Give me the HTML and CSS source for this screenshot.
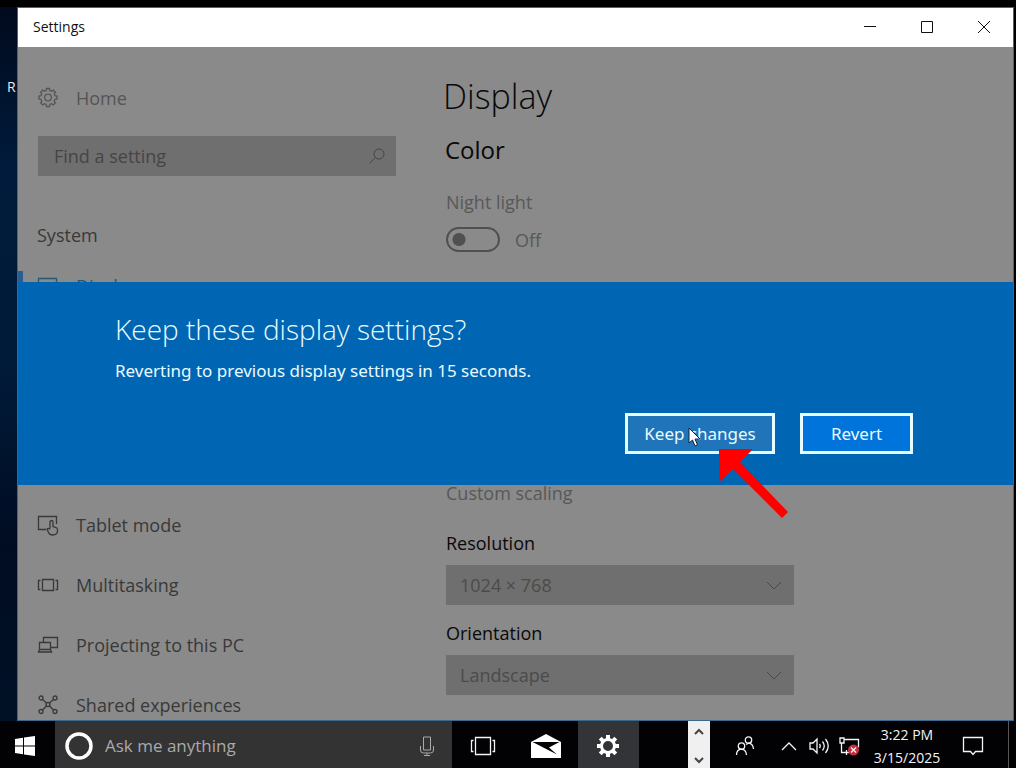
FILE: index.html
```html
<!DOCTYPE html>
<html lang="en">
<head>
<meta charset="utf-8">
<meta name="viewport" content="width=device-width, initial-scale=1">
<title>Settings</title>
<link rel="stylesheet" href="styles.css">
</head>
<body>
<div class="desktop">
  <div class="workspace">
    <div class="wallpaper"><span class="shortcut">R</span></div>
    <section class="window" aria-label="Settings">
      <header class="titlebar">
        <span class="titlebar-name">Settings</span>
        <button class="caption" aria-label="Minimize"><svg width="14" height="14" viewBox="0 0 14 14"><path d="M1 6.500h12"/></svg></button>
        <button class="caption" aria-label="Maximize"><svg width="14" height="14" viewBox="0 0 14 14"><path d="M1.500 1.500h11v11h-11z"/></svg></button>
        <button class="caption" aria-label="Close"><svg width="14" height="14" viewBox="0 0 14 14"><path d="M1 1l12 12M13 1L1 13"/></svg></button>
      </header>
      <div class="content">
        <nav class="nav">
          <a class="nav-item home" href="#home">
            <svg class="icon" viewBox="0 0 22 22"><path d="M9.200 3.500 9.500 1.500h3l.3 2 1.800.8 1.700-1.200 2.100 2.100-1.200 1.700.8 1.800 2 .3v3l-2 .3-.8 1.800 1.200 1.700-2.100 2.100-1.700-1.200-1.800.8-.3 2h-3l-.3-2-1.800-.8-1.700 1.200-2.100-2.100 1.200-1.700-.8-1.800-2-.3V9l2-.3.8-1.800-1.200-1.700 2.100-2.100 1.700 1.200z"/><circle cx="11" cy="10.500" r="3.300"/></svg>
            Home
          </a>
          <div class="search">
            <input type="text" placeholder="Find a setting" aria-label="Find a setting">
            <svg width="18" height="18" viewBox="0 0 18 18"><circle cx="11" cy="7" r="5"/><path d="M7.500 10.500 1.500 16.500"/></svg>
          </div>
          <h2 class="nav-title">System</h2>
          <a class="nav-item selected" href="#display">
            <svg class="icon" viewBox="0 0 22 22"><path d="M1.500 3.500h18v12h-18zM6 19.500h9M10.500 15.500v4"/></svg>
            Display
          </a>
          <a class="nav-item tablet" href="#tablet">
            <svg class="icon" viewBox="0 0 22 22"><path d="M9 15.500H1.500v-13h18V10"/><path d="M13 14.500V8a1.500 1.500 0 0 1 3 0v4.500l2.500.8q2 .5 2 2.200v1q0 4.500-5 4.500-2.800 0-4-2.500L10 15q1-1.500 3 .5"/></svg>
            Tablet mode
          </a>
          <a class="nav-item" href="#multitasking">
            <svg class="icon" viewBox="0 0 22 22"><path d="M5.500 5.500h11v11h-11zM3.500 6.500h-2v9h2M18.500 6.500h2v9h-2"/></svg>
            Multitasking
          </a>
          <a class="nav-item" href="#projecting">
            <svg class="icon" viewBox="0 0 22 22"><path d="M6.500 8V3.500h14v10h-7M2.500 8.500h11v7h-11zM2.500 15.500l-1 2.500h13l-1-2.500"/></svg>
            Projecting to this PC
          </a>
          <a class="nav-item" href="#shared">
            <svg class="icon" viewBox="0 0 22 22"><path d="M5.500 5.500l4 3.500M16.500 5.500l-4 3.500M5.500 16l4-4M16.500 16l-4-4"/><circle cx="4" cy="4" r="2"/><circle cx="18" cy="4" r="2"/><circle cx="4" cy="17.500" r="2"/><circle cx="18" cy="17.500" r="2"/><circle cx="11" cy="10.500" r="2"/></svg>
            Shared experiences
          </a>
        </nav>
        <main class="main">
          <h1>Display</h1>
          <h2>Color</h2>
          <label class="muted night" for="night">Night light</label>
          <div class="toggle-row"><input class="toggle" type="checkbox" role="switch" id="night"><span class="muted">Off</span></div>
          <a class="muted scaling" href="#scaling">Custom scaling</a>
          <label class="field-label" for="resolution">Resolution</label>
          <div class="select"><select id="resolution"><option>1024 × 768</option></select><svg width="16" height="10" viewBox="0 0 16 10"><path d="M1 1l7 7 7-7"/></svg></div>
          <label class="field-label orientation" for="orientation">Orientation</label>
          <div class="select"><select id="orientation"><option>Landscape</option></select><svg width="16" height="10" viewBox="0 0 16 10"><path d="M1 1l7 7 7-7"/></svg></div>
        </main>
        <div class="dialog" role="dialog" aria-labelledby="dialog-title">
          <h2 id="dialog-title">Keep these display settings?</h2>
          <p>Reverting to previous display settings in 15 seconds.</p>
          <div class="actions">
            <div class="keep-wrap">
              <button class="action keep">Keep changes</button>
              <svg class="cursor" width="14" height="20" viewBox="0 0 14 20"><path d="M1 1v15l3.500-3 2.500 6 2.500-1-2.500-6h5z"/></svg>
              <svg class="arrow" width="70" height="70" viewBox="0 0 70 70"><path d="M0 0h34L21 13l48 50-6 6-49-49L0 33z"/></svg>
            </div>
            <button class="action">Revert</button>
          </div>
        </div>
      </div>
    </section>
  </div>
  <footer class="taskbar">
    <button class="task start" aria-label="Start"><svg width="20" height="20" viewBox="0 0 20 20"><path d="M0 3l8-1.200v7.700H0zM9 1.600 20 0v9.500H9zM0 10.500h8v7.700L0 17zM9 10.500h11V20L9 18.400z"/></svg></button>
    <div class="cortana">
      <svg width="28" height="28" viewBox="0 0 28 28"><circle cx="14" cy="14" r="12" class="ring"/></svg>
      <input type="text" placeholder="Ask me anything" aria-label="Ask me anything">
      <button class="mic" aria-label="Microphone"><svg width="16" height="20" viewBox="0 0 16 20"><path d="M4.500 1h7v13h-7zM1.500 10v4q0 3 3 3h7q3 0 3-3v-4M8 17v2.500M5 19.500h6"/></svg></button>
    </div>
    <button class="task" aria-label="Task view"><svg class="line" width="26" height="20" viewBox="0 0 26 20"><path d="M5.500 1.500h15v17h-15zM3.500 4.500h-2v11h2M22.500 4.500h2v11h-2"/></svg></button>
    <button class="task mail" aria-label="Mail"><svg width="30" height="24" viewBox="0 0 30 24"><path d="M0 8 15 0l15 8v16H0z"/><path class="fold" d="M1.500 8h27L18 13.500l8 7z"/></svg></button>
    <button class="task active" aria-label="Settings"><svg width="24" height="24" viewBox="0 0 24 24"><path class="teeth" d="M12 1v22M1 12h22M4.200 4.200l15.600 15.600M19.800 4.200 4.200 19.800"/><circle class="hub" cx="12" cy="12" r="6.500"/></svg></button>
    <div class="scroller">
      <button aria-label="Scroll up"><svg width="10" height="7" viewBox="0 0 10 7"><path d="M1 6l4-4 4 4"/></svg></button>
      <button aria-label="Scroll down"><svg width="10" height="7" viewBox="0 0 10 7"><path d="M1 1l4 4 4-4"/></svg></button>
    </div>
    <div class="tray">
      <button class="people" aria-label="People"><svg class="line" width="20" height="22" viewBox="0 0 20 22"><circle cx="13.500" cy="5" r="3.200"/><circle cx="6.500" cy="11" r="3.200"/><path d="M1.500 20q0-5.500 5-5.800 4.500.3 5 5.800M11 9.500l2.500-1.300q4.500.3 5 5.800"/></svg></button>
      <button class="more" aria-label="Show hidden icons"><svg class="line" width="16" height="10" viewBox="0 0 16 10"><path d="M1 9l7-7 7 7"/></svg></button>
      <button class="sound" aria-label="Volume"><svg class="line" width="21" height="20" viewBox="0 0 21 20"><path d="M1 7h3l4-4v14l-4-4H1zM10.500 8q1.500 2 0 4M13.500 5.500q3.500 4.500 0 9M16.500 3q5.500 7 0 14"/></svg></button>
      <button class="net" aria-label="Network disconnected"><svg class="line" width="21" height="20" viewBox="0 0 21 20"><path d="M5 3.500h14.500v8M2.500 7v9.500H10M1 2h4v5H1zM4 16.500h5M7.500 14v5"/><circle class="alert" cx="14.500" cy="14" r="5.500"/><path d="M12 11.500l5 5M17 11.500l-5 5"/></svg></button>
      <time class="clock" datetime="2025-03-15T15:22"><span>3:22 PM</span><span>3/15/2025</span></time>
      <button class="notes" aria-label="Notifications"><svg class="line" width="22" height="22" viewBox="0 0 22 22"><path d="M1.500 2.500h19v14h-7L11 19.500 8.500 16.500h-7z"/></svg></button>
    </div>
  </footer>
</div>
</body>
</html>
```
FILE: styles.css
```css
* { box-sizing: border-box; }
body { margin: 0; background: #000; font-family: "Open Sans", "Noto Sans", sans-serif; font-size: 18px; line-height: 24px; }
h1, h2, p { margin: 0; font-weight: 400; }
a { color: inherit; text-decoration: none; }
button { padding: 0; border: 0; background: none; color: inherit; font: inherit; display: flex; align-items: center; justify-content: center; }
input, select { font: inherit; border: 0; border-radius: 0; margin: 0; outline: 0; appearance: none; }
svg { display: block; flex: none; fill: none; stroke: currentColor; stroke-width: 1; }

.desktop { height: 100vh; display: flex; flex-direction: column; padding-top: 7px; overflow: hidden; }
.workspace { flex: 1; min-height: 0; display: flex; padding-right: 2px; }
.wallpaper { width: 17px; overflow: hidden; padding: 68px 0 0 7px; background: linear-gradient(#000a1c, #001b3b 22%, #001b3a 50%, #000c22 75%, #001126); color: #e8e8e8; font-size: 14px; }
.window { flex: 1; min-width: 0; display: flex; flex-direction: column; border: 1px solid #39698f; background: #8a8a8a; }
.titlebar { display: flex; align-items: center; height: 39px; flex: none; padding: 0 1px 1px 15px; background: #fff; color: #111; font-size: 14px; }
.titlebar-name { flex: 1; }
.caption { width: 57px; height: 38px; }

.content { flex: 1; min-height: 0; position: relative; display: grid; grid-template-columns: 428px 1fr; overflow: hidden; }
.nav { padding-top: 31px; color: #393939; }
.nav-item { display: flex; align-items: center; gap: 17px; height: 60px; padding-left: 19px; }
.icon { width: 22px; height: 22px; stroke-width: 1.3; }
.home { height: 40px; color: #555; }
.search { display: flex; align-items: center; height: 40px; margin: 18px 50px 0 20px; padding: 0 10px 0 16px; background: #6f6f6f; color: #454545; }
.search input { flex: 1; min-width: 0; padding: 0; background: none; }
.search input::placeholder { color: #454545; opacity: 1; }
.nav-title { margin: 47px 0 9px 19px; font-size: 18px; line-height: 24px; }
.selected { color: #285878; background: linear-gradient(#285f8e, #285f8e) 0 50% / 5px 30px no-repeat; }
.tablet { margin-top: 179px; }

.main { display: flex; flex-direction: column; align-items: flex-start; padding: 25px 24px 0 0; color: #090909; }
h1 { font-size: 34px; line-height: 48px; font-weight: 300; margin-left: -3px; }
.main h2 { margin: 14px 0 0 -1px; font-size: 24px; line-height: 32px; }
.muted { color: #585858; }
.night { margin-top: 24px; }
.toggle-row { display: flex; align-items: center; gap: 15px; margin-top: 13px; }
.toggle { width: 54px; height: 25px; border: 2px solid #505050; border-radius: 13px; background: radial-gradient(circle at 11px 50%, #505050 6px, transparent 7px); }
.scaling { margin-top: 229px; }
.field-label { margin: 26px 0 10px; }
.orientation { margin-top: 16px; }
.select { position: relative; width: 348px; max-width: 100%; color: #484848; }
.select select { width: 100%; height: 40px; padding: 0 40px 0 14px; background: #6f6f6f; color: #4b4b4b; }
.select svg { position: absolute; right: 12px; top: 16px; pointer-events: none; }

.dialog { position: absolute; left: 0; right: 0; top: 235px; padding: 29px 100px 31px 97px; background: #0065b3; color: #e9fbff; }
.dialog h2 { font-size: 28px; line-height: 36px; font-weight: 300; }
.dialog p { margin-top: 12px; font-family: "Noto Sans", "Open Sans", sans-serif; }
.dialog p, .action { font-size: 17px; }
.actions { display: flex; justify-content: flex-end; gap: 25px; margin-top: 30px; }
.keep-wrap { position: relative; }
.action { width: 113px; height: 41px; border: 3px solid #e6fcff; background: #0074da; font-family: "Noto Sans", "Open Sans", sans-serif; }
.keep { width: 150px; background: #1f74ba; }
.cursor { position: absolute; left: 63px; top: 14px; fill: #fff; stroke: #17213a; }
.arrow { position: absolute; left: 94px; top: 36px; fill: #f00; stroke: none; }

.taskbar { display: flex; height: 47px; flex: none; background: #020205; color: #f4f4f4; }
.task { width: 61px; padding-top: 2px; }
.start { width: 55px; padding-right: 5px; }
.start svg { fill: #fff; stroke: none; }
.cortana { width: 397px; display: flex; align-items: center; padding: 3px 17px 0 10px; background: #333; }
.ring { stroke: #fff; stroke-width: 3.5; }
.cortana input { flex: 1; min-width: 0; padding: 0 0 0 12px; background: none; font-size: 17px; }
.cortana input::placeholder { color: #aaa; opacity: 1; }
.mic { color: #aaa; }
.mail { width: 65px; }
.mail svg { fill: #fff; stroke: none; }
.mail .fold { fill: #020205; }
.active { padding-right: 2px; background: #333438; }
.teeth { stroke: #fff; stroke-width: 4; }
.hub { fill: #333438; stroke: #fff; stroke-width: 3; }
.scroller { width: 22px; margin-left: auto; display: flex; flex-direction: column; justify-content: space-between; align-items: center; padding: 7px 0 4px; background: #f0f0f0; color: #444; }
.scroller svg { stroke-width: 2; }
.tray { display: flex; align-items: center; margin-right: 7px; padding: 2px 0 0 25px; border-right: 1px solid #555; }
.line { stroke: #f4f4f4; stroke-width: 1.3; }
.more { margin-left: 26px; }
.sound { margin-left: 12px; }
.net { margin-left: 9px; }
.alert { fill: #c72f3b; stroke: none; }
.clock { display: flex; flex-direction: column; align-items: center; width: 70px; margin-left: 12px; font-size: 14px; line-height: 23px; }
.notes { margin: 0 24px 0 20px; }
```
